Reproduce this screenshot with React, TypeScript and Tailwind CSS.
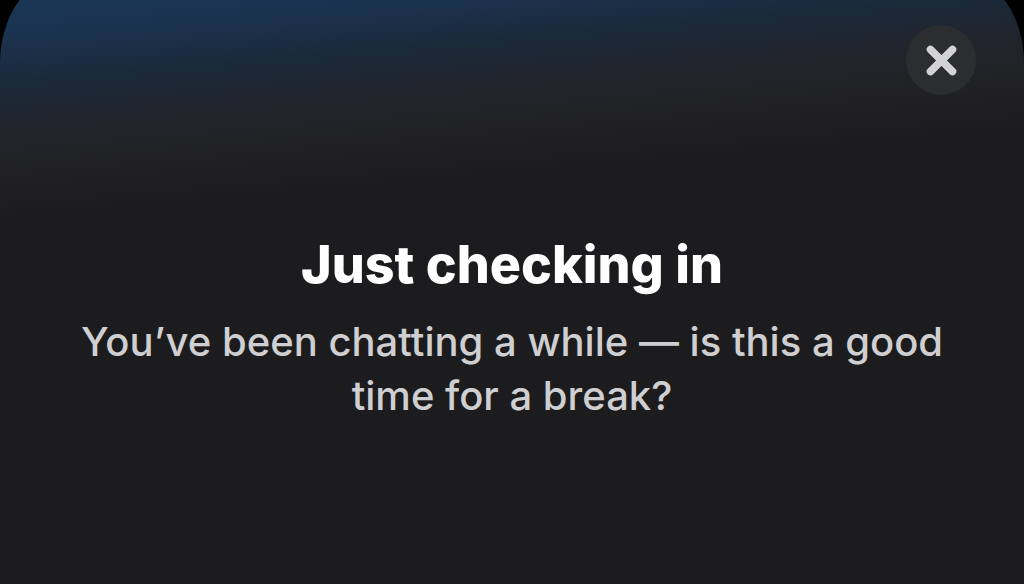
export default function App() {
  return (
    <div className="min-h-screen overflow-hidden bg-black font-['Inter',sans-serif]">
      <section
        role="dialog"
        aria-labelledby="title"
        aria-describedby="message"
        className="-mt-5 flex min-h-[calc(100vh+20px)] flex-col rounded-t-[56px_84px] bg-[#1c1c1e] bg-[linear-gradient(175deg,#1a3a5c_0px,#1a3654_30px,#1b304b_68px,#1b2937_108px,#20252f_138px,#222326_172px,#202022_204px,#1c1c1e_236px)] px-12 pt-[45px]"
      >
        <header className="flex justify-end">
          <button
            type="button"
            aria-label="Close"
            className="flex size-[70px] items-center justify-center rounded-full bg-[#2c2d2f]"
          >
            <svg viewBox="0 0 32 32" className="size-8" fill="none" stroke="#d3d3d5" strokeWidth="7.6" strokeLinecap="round">
              <path d="M5.5 5.5 27.5 27.5M27.5 5.5 5.5 27.5" />
            </svg>
          </button>
        </header>
        <main className="mt-[138px] text-center">
          <h1 id="title" className="text-[52px] leading-[64px] font-extrabold text-white">
            Just checking in
          </h1>
          <p id="message" className="mt-[18px] text-[40px] leading-[54px] font-medium text-[#cfcfd1]">
            You’ve been chatting a while — is this a good time for a break?
          </p>
        </main>
      </section>
    </div>
  );
}
